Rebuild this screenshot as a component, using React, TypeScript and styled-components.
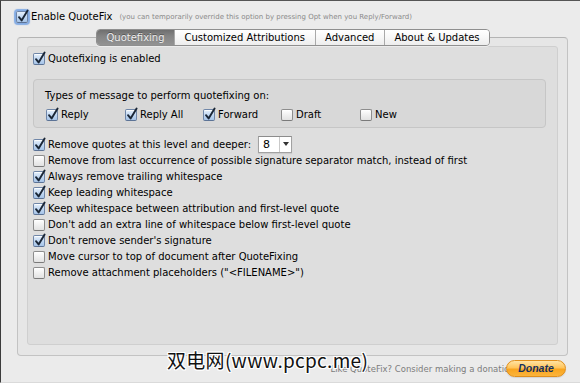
import React from "react";
import styled, { createGlobalStyle, css } from "styled-components";

const GlobalStyle = createGlobalStyle`
  html, body { margin: 0; padding: 0; background: #ebebeb; }
  body {
    font-family: "DejaVu Sans", "Noto Sans", sans-serif;
    font-size: 10px;
    color: #000;
  }
  * { box-sizing: border-box; }
`;

const Window = styled.div`
  position: relative;
  width: 580px;
  height: 383px;
  overflow: hidden;
  background: #ebebeb;
  border-top: 1px solid #555;
  border-left: 1px solid #3c3c3c;
  border-bottom: 1px solid #dadada;
  display: flex;
  flex-direction: column;
  padding: 9px 12px 0 15px;
`;

const Header = styled.div`
  display: flex;
  align-items: center;
  height: 14px;
`;

const Label = styled.span`
  white-space: nowrap;
  line-height: 14px;
`;

const Note = styled.span`
  font-size: 7px;
  color: #8a8a8a;
  margin-left: 7px;
  white-space: nowrap;
`;

const CheckRow = styled.label`
  display: flex;
  align-items: center;
  gap: 3px;
  height: 16px;
  white-space: nowrap;
`;

const BoxWrap = styled.span<{ $checked?: boolean; $focus?: boolean }>`
  position: relative;
  flex: none;
  width: 12px;
  height: 12px;
  border-radius: 2px;
  border: 1px solid #8d8d8d;
  border-bottom-color: #7a7a7a;
  background: linear-gradient(#ffffff, #f0f0f0 50%, #e2e2e2);
  box-shadow: inset 0 1px 0 rgba(255, 255, 255, 0.8);
  ${(p) =>
    p.$checked &&
    css`
      border-color: #6f86a8;
      border-bottom-color: #5c7396;
      background: linear-gradient(#e6f0fb, #c2d8f2 50%, #a6c4e8);
    `}
  ${(p) =>
    p.$focus &&
    css`
      box-shadow: 0 0 1px 2px rgba(96, 150, 225, 0.75);
    `}
  svg {
    position: absolute;
    left: 0px;
    top: -3px;
    overflow: visible;
  }
`;

const Check: React.FC<{ checked?: boolean; focus?: boolean }> = ({ checked, focus }) => (
  <BoxWrap $checked={checked} $focus={focus}>
    {checked && (
      <svg width="12" height="14" viewBox="0 0 12 14">
        <path
          d="M2 8.2 L4.6 11.4 L10.6 1.6"
          fill="none"
          stroke="#1a2636"
          strokeWidth="1.9"
          strokeLinecap="round"
          strokeLinejoin="round"
        />
      </svg>
    )}
  </BoxWrap>
);

const Option: React.FC<{ checked?: boolean; children: React.ReactNode }> = ({ checked, children }) => (
  <CheckRow>
    <Check checked={checked} />
    <Label>{children}</Label>
  </CheckRow>
);

const TabView = styled.div`
  display: flex;
  flex-direction: column;
  margin-top: 5px;
  margin-left: 1px;
  width: 551px;
`;

const TabBar = styled.div`
  position: relative;
  z-index: 1;
  align-self: center;
  display: flex;
  height: 17px;
  margin-left: 1px;
  border: 1px solid #8f8f8f;
  border-radius: 4px;
  overflow: hidden;
  box-shadow: 0 1px 0 rgba(255, 255, 255, 0.6);
`;

const Tab = styled.div<{ $active?: boolean }>`
  display: flex;
  align-items: center;
  padding: 0 9.5px;
  font-size: 10px;
  white-space: nowrap;
  background: linear-gradient(#ffffff, #f7f7f7 50%, #ededed);
  color: #000;
  & + & { border-left: 1px solid #a9a9a9; }
  ${(p) =>
    p.$active &&
    css`
      background: linear-gradient(#6f6f6f, #848484 40%, #939393);
      color: #ededed;
      text-shadow: 0 -1px 0 rgba(0, 0, 0, 0.35);
    `}
`;

const Panel = styled.div`
  margin-top: -9px;
  height: 319px;
  border: 1px solid #c3c3c3;
  border-top-color: #b4b4b4;
  border-radius: 4px;
  background: #e6e6e6;
  padding: 8px 9px 10px 9px;
  display: flex;
`;

const Inner = styled.div`
  flex: 1;
  background: #dedede;
  border: 1px solid #cfcfcf;
  border-radius: 3px;
  padding: 4px 11px 0 5px;
  display: flex;
  flex-direction: column;
`;

const TypesBox = styled.div`
  margin-top: 12px;
  height: 49px;
  border: 1px solid #c6c6c6;
  border-radius: 4px;
  background: #d8d8d8;
  padding: 9px 0 0 12px;
  display: flex;
  flex-direction: column;
`;

const TypesTitle = styled.div`
  line-height: 14px;
  height: 14px;
  margin-left: -1px;
`;

const TypesGrid = styled.div`
  margin-top: 4px;
  display: grid;
  grid-template-columns: 79px 78px 78px 79px auto;
`;

const OptionList = styled.div`
  margin-top: 9px;
  display: flex;
  flex-direction: column;
`;

const Popup = styled.span`
  display: inline-flex;
  align-items: stretch;
  height: 17px;
  width: 34px;
  margin: -2px 0 0 4px;
  border: 1px solid #a2a2a2;
  border-top-color: #8c8c8c;
  background: #fff;
  box-shadow: 0 1px 1px rgba(0, 0, 0, 0.08);
`;

const PopupValue = styled.span`
  flex: 1;
  padding-left: 4px;
  font-size: 11px;
  line-height: 15px;
`;

const PopupArrow = styled.span`
  width: 12px;
  border-left: 1px solid #c9c9c9;
  display: flex;
  align-items: center;
  justify-content: center;
  svg { display: block; }
`;

const Footer = styled.div`
  display: flex;
  align-items: center;
  justify-content: flex-end;
  height: 17px;
  margin-top: 4px;
  padding-right: 2px;
`;

const FooterText = styled.span`
  font-size: 8.5px;
  color: #7d7d7d;
  white-space: nowrap;
`;

const Donate = styled.button`
  position: relative;
  margin-left: -12px;
  width: 60px;
  height: 17px;
  border-radius: 9px;
  border: 1px solid #e08f1c;
  background: linear-gradient(#ffe3a3, #ffc55c 45%, #f9a51f 55%, #fbb43c);
  font-family: "Liberation Sans", Arial, sans-serif;
  font-style: italic;
  font-weight: bold;
  font-size: 10.5px;
  color: #16305e;
  padding: 0;
  line-height: 15px;
  box-shadow: 0 1px 1px rgba(0, 0, 0, 0.1);
`;

const Watermark = styled.div`
  position: absolute;
  left: 166px;
  top: 347px;
  font-family: "Noto Sans CJK SC", "DejaVu Sans", sans-serif;
  font-size: 19px;
  line-height: 24px;
  color: #111;
  white-space: nowrap;
  letter-spacing: 0.3px;
  text-shadow: 1px 0 0 #fff, -1px 0 0 #fff, 0 1px 0 #fff, 0 -1px 0 #fff,
    1px 1px 0 #fff, -1px -1px 0 #fff, 1px -1px 0 #fff, -1px 1px 0 #fff;
`;

const options: { label: string; checked: boolean; popup?: boolean }[] = [
  { label: "Remove quotes at this level and deeper:", checked: true, popup: true },
  { label: "Remove from last occurrence of possible signature separator match, instead of first", checked: false },
  { label: "Always remove trailing whitespace", checked: true },
  { label: "Keep leading whitespace", checked: true },
  { label: "Keep whitespace between attribution and first-level quote", checked: true },
  { label: "Don't add an extra line of whitespace below first-level quote", checked: false },
  { label: "Don't remove sender's signature", checked: true },
  { label: "Move cursor to top of document after QuoteFixing", checked: false },
  { label: 'Remove attachment placeholders ("<FILENAME>")', checked: false },
];

const types: { label: string; checked: boolean }[] = [
  { label: "Reply", checked: true },
  { label: "Reply All", checked: true },
  { label: "Forward", checked: true },
  { label: "Draft", checked: false },
  { label: "New", checked: false },
];

export default function App() {
  return (
    <>
      <GlobalStyle />
      <Window>
        <Header>
          <CheckRow>
            <Check checked focus />
            <Label>Enable QuoteFix</Label>
          </CheckRow>
          <Note>(you can temporarily override this option by pressing Opt when you Reply/Forward)</Note>
        </Header>
        <TabView>
          <TabBar>
            <Tab $active>Quotefixing</Tab>
            <Tab>Customized Attributions</Tab>
            <Tab>Advanced</Tab>
            <Tab>About &amp; Updates</Tab>
          </TabBar>
          <Panel>
            <Inner>
              <Option checked>Quotefixing is enabled</Option>
              <TypesBox>
                <TypesTitle>Types of message to perform quotefixing on:</TypesTitle>
                <TypesGrid>
                  {types.map((t) => (
                    <Option key={t.label} checked={t.checked}>
                      {t.label}
                    </Option>
                  ))}
                </TypesGrid>
              </TypesBox>
              <OptionList>
                {options.map((o) => (
                  <CheckRow key={o.label}>
                    <Check checked={o.checked} />
                    <Label>{o.label}</Label>
                    {o.popup && (
                      <Popup>
                        <PopupValue>8</PopupValue>
                        <PopupArrow>
                          <svg width="6" height="4" viewBox="0 0 6 4">
                            <path d="M0 0 H6 L3 4 Z" fill="#333" />
                          </svg>
                        </PopupArrow>
                      </Popup>
                    )}
                  </CheckRow>
                ))}
              </OptionList>
            </Inner>
          </Panel>
        </TabView>
        <Footer>
          <FooterText>Like QuoteFix? Consider making a donation!</FooterText>
          <Donate>Donate</Donate>
        </Footer>
        <Watermark>双电网(www.pcpc.me)</Watermark>
      </Window>
    </>
  );
}
